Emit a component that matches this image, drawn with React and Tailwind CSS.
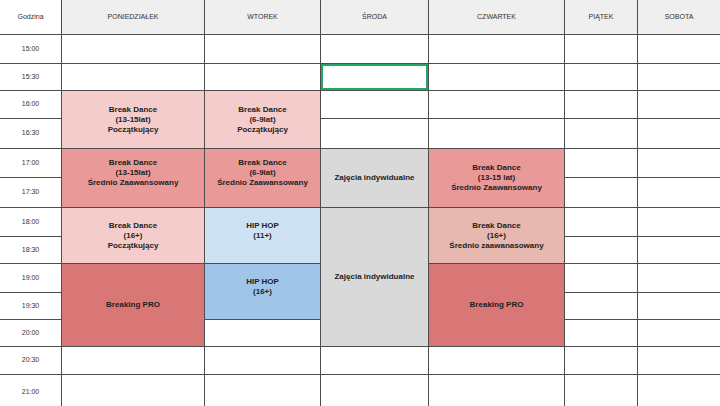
const days = ["PONIEDZIAŁEK", "WTOREK", "ŚRODA", "CZWARTEK", "PIĄTEK", "SOBOTA"];

const times = [
  "15:00", "15:30", "16:00", "16:30", "17:00", "17:30", "18:00",
  "18:30", "19:00", "19:30", "20:00", "20:30", "21:00",
];

const PINK = "bg-[#f4cccc]";
const RED1 = "bg-[#ea9999]";
const RED = "bg-[#d87775]";
const BERRY = "bg-[#e6b8af]";
const SKY = "bg-[#cfe2f3]";
const BLUE = "bg-[#9fc5e8]";
const GRAY = "bg-[#d9d9d9]";

const e = { span: 1 };

const columns = [
  [
    e, e,
    { span: 2, bg: PINK, lines: ["Break Dance", "(13-15lat)", "Początkujący"] },
    { span: 2, bg: RED1, lines: ["Break Dance", "(13-15lat)", "Średnio Zaawansowany"], extra: true },
    { span: 2, bg: PINK, lines: ["Break Dance", "(16+)", "Początkujący"] },
    { span: 3, bg: RED, lines: ["Breaking PRO"] },
    e, e,
  ],
  [
    e, e,
    { span: 2, bg: PINK, lines: ["Break Dance", "(6-9lat)", "Początkujący"] },
    { span: 2, bg: RED1, lines: ["Break Dance", "(6-9lat)", "Średnio Zaawansowany"], extra: true },
    { span: 2, bg: SKY, lines: ["HIP HOP", "(11+)"], extra: true },
    { span: 2, bg: BLUE, lines: ["HIP HOP", "(16+)"], extra: true },
    e, e, e,
  ],
  [
    e,
    { span: 1, selected: true },
    e, e,
    { span: 2, bg: GRAY, lines: ["Zajęcia indywidualne"] },
    { span: 5, bg: GRAY, lines: ["Zajęcia indywidualne"] },
    e, e,
  ],
  [
    e, e, e, e,
    { span: 2, bg: RED1, lines: ["Break Dance", "(13-15 lat)", "Średnio Zaawansowany"] },
    { span: 2, bg: BERRY, lines: ["Break Dance", "(16+)", "Średnio zaawanasowany"] },
    { span: 3, bg: RED, lines: ["Breaking PRO"] },
    e, e,
  ],
  Array(13).fill(e),
  Array(13).fill(e),
];

const spanClass = {
  1: "row-span-1",
  2: "row-span-2",
  3: "row-span-3",
  5: "row-span-5",
};

const colStart = ["col-start-2", "col-start-3", "col-start-4", "col-start-5", "col-start-6", "col-start-7"];
const rowStart = [
  "row-start-2", "row-start-3", "row-start-4", "row-start-5", "row-start-6", "row-start-7", "row-start-8",
  "row-start-9", "row-start-10", "row-start-11", "row-start-12", "row-start-13", "row-start-14",
];

const Cell = ({ cell, col, row }) => {
  const bg = cell.bg || "bg-white";
  return (
    <div
      className={`${colStart[col]} ${rowStart[row]} ${spanClass[cell.span]} ${bg} flex flex-col items-center justify-center text-center font-bold text-[8px] leading-[10px] text-[#222] ${
        cell.selected ? "shadow-[inset_0_0_0_2px_#22a565]" : ""
      }`}
    >
      {cell.lines && cell.lines.map((l) => <span key={l}>{l}</span>)}
      {cell.extra && <span>&nbsp;</span>}
    </div>
  );
};

export default function App() {
  return (
    <div
      className="w-[720px] h-[406px] overflow-hidden bg-white"
      style={{ fontFamily: '"Liberation Sans", Arial, sans-serif' }}
    >
      <div className="grid grid-cols-[61px_142px_115px_107px_135px_72px_82px] grid-rows-[34px_28px_26px_27px_29px_28px_29px_28px_26px_28px_26px_26px_27px_34px] gap-px bg-[#4d4d4d]">
        <div className="col-start-1 row-start-1 bg-white flex items-center justify-center text-[7px] text-[#333]">
          Godzina
        </div>
        {days.map((d, i) => (
          <div
            key={d}
            className={`${colStart[i]} row-start-1 bg-[#efefef] flex items-center justify-center text-[7px] text-[#333]`}
          >
            {d}
          </div>
        ))}
        {times.map((t, r) => (
          <div
            key={t}
            className={`col-start-1 ${rowStart[r]} bg-white flex items-center justify-center text-[7px] text-[#333]`}
          >
            {t}
          </div>
        ))}
        {columns.map((cells, c) => {
          let r = 0;
          return cells.map((cell, k) => {
            const start = r;
            r += cell.span;
            return <Cell key={`${c}-${k}`} cell={cell} col={c} row={start} />;
          });
        })}
      </div>
    </div>
  );
}
